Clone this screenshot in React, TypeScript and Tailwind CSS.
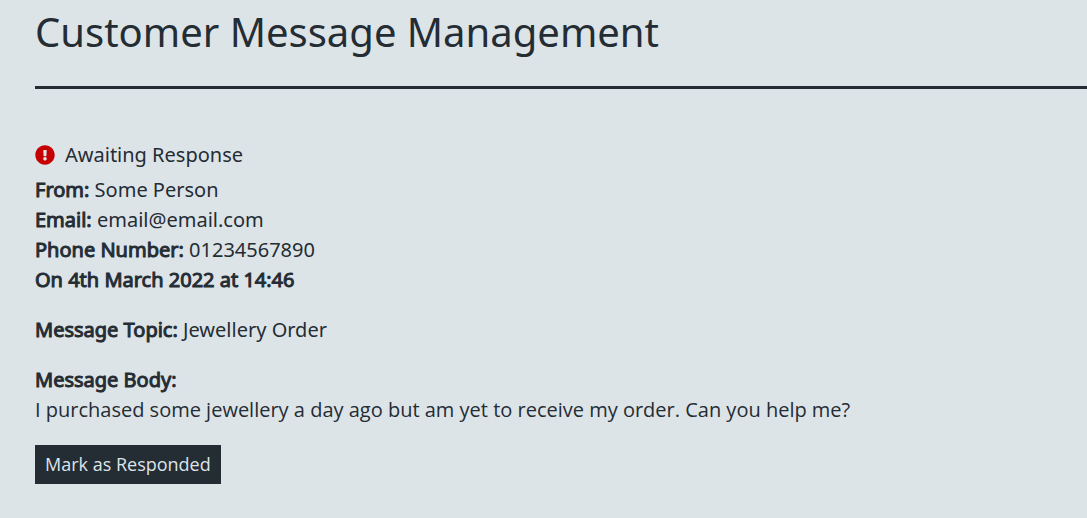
import { FaExclamationCircle } from "react-icons/fa";

function Detail({ label, value }: { label: string; value: string }) {
  return (
    <p>
      <strong className="font-normal [-webkit-text-stroke:1px_currentColor]">{label}</strong> {value}
    </p>
  );
}

export default function App() {
  return (
    <main className="min-h-screen bg-[#dde4e8] pt-2 pb-8 pl-[35px] font-['Noto_Sans',sans-serif] text-[20px] leading-[30px] text-[#242c34]">
      <h1 className="text-[40px] leading-[48px]">Customer Message Management</h1>
      <hr className="mt-[30px] border-0 border-t-[3px] border-[#242c34]" />
      <section className="mt-[51px]">
        <p className="flex items-center gap-[10px]">
          <FaExclamationCircle className="size-5 text-[#c60000]" aria-hidden="true" />
          Awaiting Response
        </p>
        <div className="mt-[5px]">
          <Detail label="From:" value="Some Person" />
          <Detail label="Email:" value="email@email.com" />
          <Detail label="Phone Number:" value="01234567890" />
          <p className="[-webkit-text-stroke:1px_currentColor]">On 4th March 2022 at 14:46</p>
        </div>
        <div className="mt-5">
          <Detail label="Message Topic:" value="Jewellery Order" />
        </div>
        <div className="mt-5">
          <p className="[-webkit-text-stroke:1px_currentColor]">Message Body:</p>
          <p className="font-['Open_Sans',sans-serif]">I purchased some jewellery a day ago but am yet to receive my order. Can you help me?</p>
        </div>
        <button type="button" className="mt-5 bg-[#242c34] px-[10px] py-1 font-['Open_Sans',sans-serif] text-[18px] leading-[31px] text-[#dde4e8]">
          Mark as Responded
        </button>
      </section>
    </main>
  );
}
